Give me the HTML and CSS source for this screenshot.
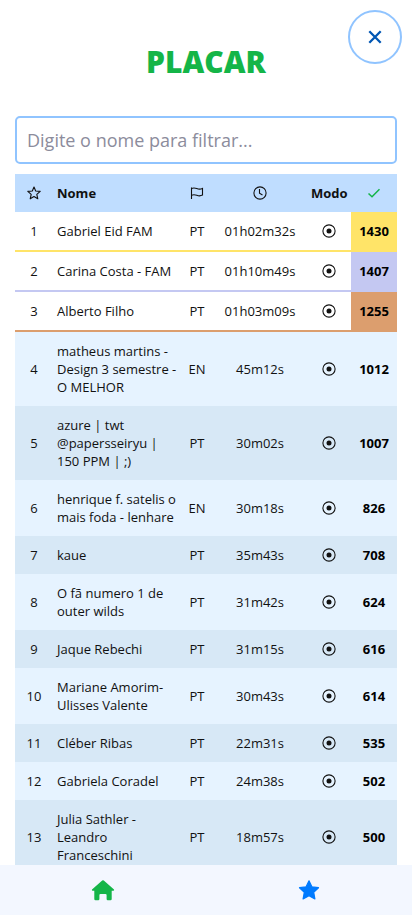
FILE: index.html
```html
<!DOCTYPE html>
<html lang="pt-BR">
<head>
<meta charset="utf-8">
<meta name="viewport" content="width=device-width, initial-scale=1">
<title>Placar</title>
<link rel="stylesheet" href="styles.css">
</head>
<body>
<svg class="sprite" aria-hidden="true">
  <symbol id="target" viewBox="0 0 16 16"><circle cx="8" cy="8" r="6.1" fill="none" stroke="currentColor" stroke-width="1.1"/><circle cx="8" cy="8" r="2.5" fill="currentColor"/></symbol>
</svg>
<main class="board">
  <button class="close" type="button" aria-label="Fechar">
    <svg viewBox="0 0 14 14" width="14" height="14"><path d="M1.300 1.300l11.400 11.400M12.700 1.300L1.300 12.700" fill="none" stroke="currentColor" stroke-width="2.300"/></svg>
  </button>
  <h1 class="title">PLACAR</h1>
  <input class="filter" type="text" aria-label="Filtrar por nome" placeholder="Digite o nome para filtrar...">
  <table class="scores">
    <colgroup><col class="col-rank"><col><col class="col-lang"><col class="col-time"><col class="col-mode"><col class="col-points"></colgroup>
    <thead>
      <tr>
        <th aria-label="Posição"><svg class="icon" viewBox="0 0 16 16"><path d="M8 2l1.700 4 4.500.4-3.400 3 1 4.400L8 11.500l-3.800 2.300 1-4.400-3.400-3 4.500-.4z" fill="none" stroke="currentColor" stroke-width="1.100" stroke-linejoin="round"/></svg></th>
        <th class="name">Nome</th>
        <th aria-label="Idioma"><svg class="icon" viewBox="0 0 16 16"><path d="M2.500 2.500v11.500M2.500 3.500c2-.8 3.500-.6 5.300.1 2 .8 3.700.8 5.700-.2v6.700c-2 1-3.700 1-5.700.2-1.800-.7-3.300-.9-5.300-.1" fill="none" stroke="currentColor" stroke-width="1.100"/></svg></th>
        <th aria-label="Tempo"><svg class="icon" viewBox="0 0 16 16"><circle cx="8" cy="8" r="6.100" fill="none" stroke="currentColor" stroke-width="1.100"/><path d="M7.500 4v4.200l3 1.800" fill="none" stroke="currentColor" stroke-width="1.100"/></svg></th>
        <th>Modo</th>
        <th aria-label="Acertos"><svg class="icon check" viewBox="0 0 16 16"><path d="M2.500 8.500l3.500 3.300 7.500-7.600" fill="none" stroke="currentColor" stroke-width="1.500"/></svg></th>
      </tr>
    </thead>
    <tbody>
      <tr class="gold"><td>1</td><td class="name">Gabriel Eid FAM</td><td>PT</td><td>01h02m32s</td><td><svg class="icon"><use href="#target"/></svg></td><td class="points">1430</td></tr>
      <tr class="silver"><td>2</td><td class="name">Carina Costa - FAM</td><td>PT</td><td>01h10m49s</td><td><svg class="icon"><use href="#target"/></svg></td><td class="points">1407</td></tr>
      <tr class="bronze"><td>3</td><td class="name">Alberto Filho</td><td>PT</td><td>01h03m09s</td><td><svg class="icon"><use href="#target"/></svg></td><td class="points">1255</td></tr>
      <tr><td>4</td><td class="name">matheus martins - Design 3 semestre - O MELHOR</td><td>EN</td><td>45m12s</td><td><svg class="icon"><use href="#target"/></svg></td><td class="points">1012</td></tr>
      <tr><td>5</td><td class="name">azure | twt @papersseiryu | 150 PPM | ;)</td><td>PT</td><td>30m02s</td><td><svg class="icon"><use href="#target"/></svg></td><td class="points">1007</td></tr>
      <tr><td>6</td><td class="name">henrique f. satelis o mais foda - lenhare</td><td>EN</td><td>30m18s</td><td><svg class="icon"><use href="#target"/></svg></td><td class="points">826</td></tr>
      <tr><td>7</td><td class="name">kaue</td><td>PT</td><td>35m43s</td><td><svg class="icon"><use href="#target"/></svg></td><td class="points">708</td></tr>
      <tr><td>8</td><td class="name">O fã numero 1 de outer wilds</td><td>PT</td><td>31m42s</td><td><svg class="icon"><use href="#target"/></svg></td><td class="points">624</td></tr>
      <tr><td>9</td><td class="name">Jaque Rebechi</td><td>PT</td><td>31m15s</td><td><svg class="icon"><use href="#target"/></svg></td><td class="points">616</td></tr>
      <tr><td>10</td><td class="name">Mariane Amorim-Ulisses Valente</td><td>PT</td><td>30m43s</td><td><svg class="icon"><use href="#target"/></svg></td><td class="points">614</td></tr>
      <tr><td>11</td><td class="name">Cléber Ribas</td><td>PT</td><td>22m31s</td><td><svg class="icon"><use href="#target"/></svg></td><td class="points">535</td></tr>
      <tr><td>12</td><td class="name">Gabriela Coradel</td><td>PT</td><td>24m38s</td><td><svg class="icon"><use href="#target"/></svg></td><td class="points">502</td></tr>
      <tr><td>13</td><td class="name">Julia Sathler - Leandro Franceschini</td><td>PT</td><td>18m57s</td><td><svg class="icon"><use href="#target"/></svg></td><td class="points">500</td></tr>
    </tbody>
  </table>
</main>
<nav class="tabs">
  <a class="tab home" href="#inicio" aria-label="Início"><svg viewBox="0 0 24 22" width="24" height="22"><path d="M12 1.200q.4 0 .8.300L23 10.600q.5.900-.5 1.200H20.700v8.300q0 1.200-1.200 1.200h-2.700q-1.200 0-1.200-1.200v-4q0-1.100-1.100-1.100h-5q-1.100 0-1.100 1.100v4q0 1.200-1.200 1.200H4.500q-1.200 0-1.200-1.200v-8.300H1.500q-1-.3-.5-1.200L11.200 1.500q.4-.3.800-.3z" fill="currentColor"/></svg></a>
  <a class="tab star" href="#placar" aria-label="Placar"><svg viewBox="0 0 24 22" width="24" height="22"><path d="M12 1.800l2.900 6 6.600.9-4.800 4.600 1.200 6.600-5.900-3.100-5.900 3.100 1.200-6.600-4.800-4.600 6.600-.9z" fill="currentColor" stroke="currentColor" stroke-width="1.200" stroke-linejoin="round"/></svg></a>
</nav>
</body>
</html>
```
FILE: styles.css
```css
* {
  box-sizing: border-box;
}

body {
  display: flex;
  flex-direction: column;
  height: 100vh;
  margin: 0;
  background: #fff;
  color: #111;
  font-family: "Open Sans", sans-serif;
  font-size: 13px;
  line-height: 18px;
}

.sprite {
  position: absolute;
  width: 0;
  height: 0;
}

.board {
  position: relative;
  flex: 1;
  min-height: 0;
  padding: 40px 15px 20px;
  overflow-y: auto;
  scrollbar-width: none;
}

.close {
  position: absolute;
  top: 10px;
  right: 10px;
  display: flex;
  align-items: center;
  justify-content: center;
  width: 54px;
  height: 54px;
  padding: 0;
  border: 2px solid #90c4ff;
  border-radius: 50%;
  background: #fff;
  color: #0056b3;
}

.title {
  margin: 0 0 32px;
  color: #14b548;
  font-size: 30px;
  font-weight: 800;
  line-height: 44px;
  text-align: center;
}

.filter {
  display: block;
  width: 100%;
  height: 48px;
  margin-bottom: 10px;
  padding: 0 10px;
  border: 2px solid #90c4ff;
  border-radius: 5px;
  background: #fff;
  color: #111;
  font: 400 18px "Open Sans", sans-serif;
}

.filter::placeholder {
  color: #8c8c9c;
}

.scores {
  width: 100%;
  border-collapse: separate;
  border-spacing: 0;
  table-layout: fixed;
}

.col-rank { width: 38px; }
.col-lang { width: 32px; }
.col-time { width: 94px; }
.col-mode { width: 44px; }
.col-points { width: 46px; }

.scores th,
.scores td {
  padding: 10px 4px;
  text-align: center;
}

.scores th {
  background: #bfddff;
  font-weight: 700;
}

.scores .name {
  text-align: left;
}

.scores tbody tr {
  background: #e6f3ff;
}

.scores tbody tr:nth-child(odd) {
  background: #d7e8f6;
}

.scores .points {
  color: #000;
  font-weight: 700;
}

.gold { --medal: #ffe468; }
.silver { --medal: #c4c8f2; }
.bronze { --medal: #dc9e6e; }

.scores .gold td,
.scores .silver td,
.scores .bronze td {
  border-bottom: 2px solid var(--medal);
  background: #fff;
}

.scores .gold .points,
.scores .silver .points,
.scores .bronze .points {
  background: var(--medal);
}

.icon {
  display: block;
  width: 16px;
  height: 16px;
  margin: 0 auto;
}

.check {
  color: #14b548;
}

.tabs {
  display: flex;
  height: 50px;
  background: #f3f7ff;
}

.tab {
  display: flex;
  flex: 1;
  align-items: center;
  justify-content: center;
}

.home { color: #14b548; }
.star { color: #007bff; }
```
